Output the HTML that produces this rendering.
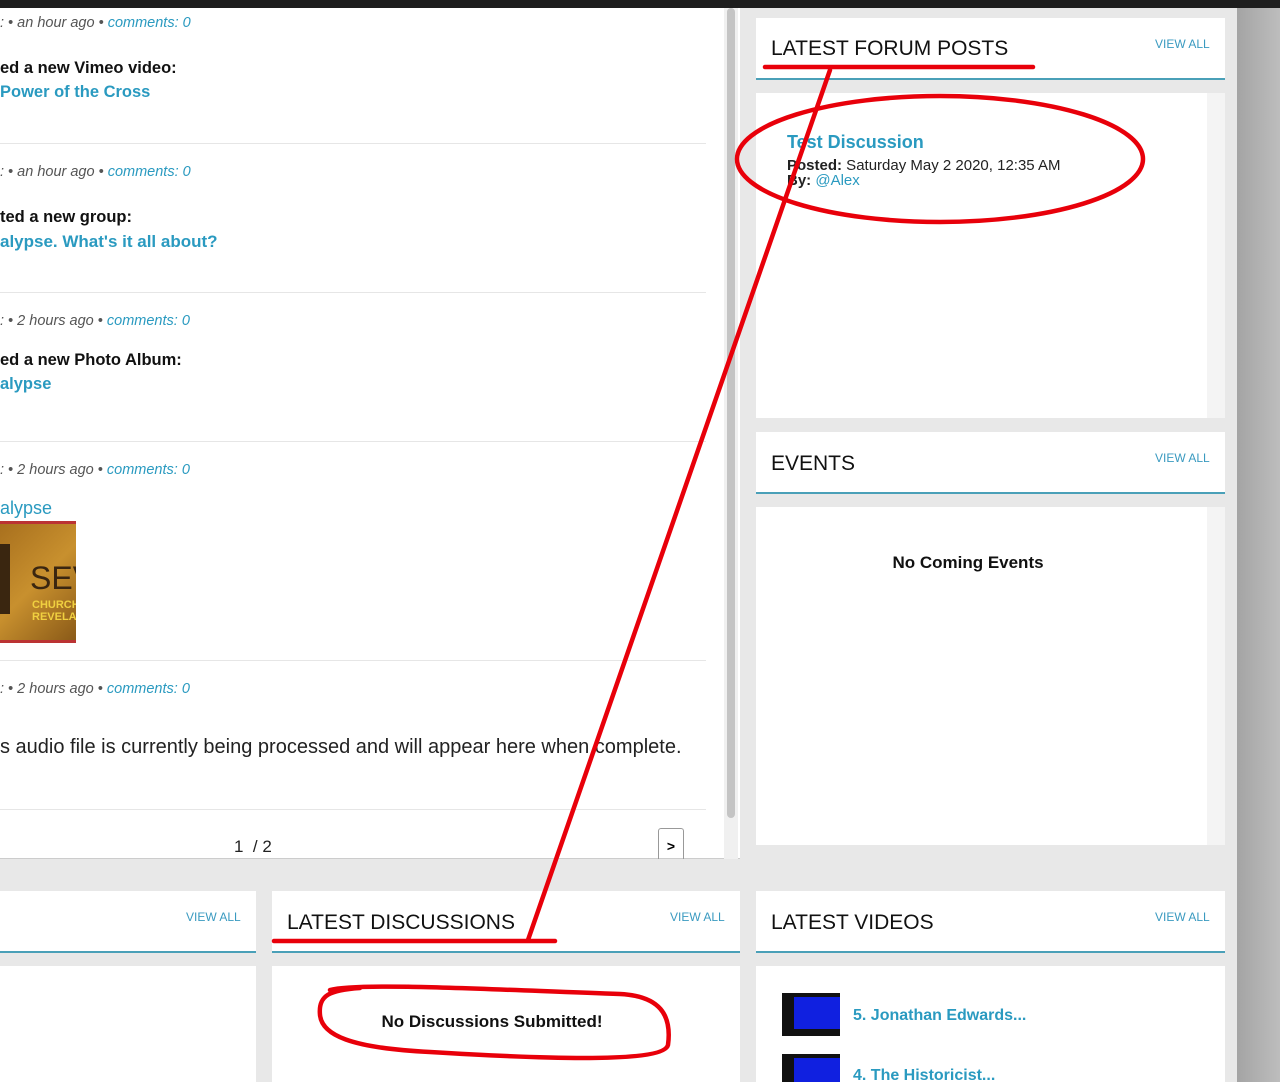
<!DOCTYPE html>
<html><head><meta charset="utf-8"><style>
*{margin:0;padding:0;box-sizing:border-box}
html,body{width:1280px;height:1082px;overflow:hidden}
body{background:#e8e8e8;font-family:"Liberation Sans",sans-serif;position:relative}
.a{position:absolute}
.top{left:0;top:0;width:1280px;height:8px;background:#1e1e1e}
.strip{left:1237px;top:8px;width:43px;height:1074px;background:linear-gradient(90deg,#a4a4a4,#bdbdbd)}
.main{left:0;top:8px;width:740px;height:851px;background:#fff;border-bottom:1px solid #ccc}
.sb{left:724px;top:8px;width:14px;height:851px;background:#f0f0f0}
.sbt{left:727px;top:8px;width:8px;height:810px;background:#c4c4c4;border-radius:4px}
.meta{font-style:italic;font-size:14.5px;color:#555}
.meta span{color:#2a9ac0}
.b{font-weight:bold;font-size:16.5px;color:#111}
.l{font-weight:bold;font-size:16.5px;color:#2a9ac0}
.hr{left:0;width:706px;height:1px;background:#e6e6e6}
.panel{background:#fff}
.h{font-size:21px;color:#111}
.va{font-size:12px;color:#3a9ac0}
.line{height:2px;background:#4aa0b8}
</style></head><body>
<div class="a top"></div>
<div class="a strip"></div>
<div class="a main"></div>
<div class="a sb"></div><div class="a sbt"></div>

<div class="a meta" style="left:0;top:15px">: • an hour ago • <span>comments: 0</span></div>
<div class="a b" style="left:0;top:59px">ed a new Vimeo video:</div>
<div class="a l" style="left:0;top:83px">Power of the Cross</div>
<div class="a hr" style="top:143px"></div>
<div class="a meta" style="left:0;top:164px">: • an hour ago • <span>comments: 0</span></div>
<div class="a b" style="left:0;top:208px">ted a new group:</div>
<div class="a l" style="left:0;top:232px;font-size:17px">alypse. What's it all about?</div>
<div class="a hr" style="top:292px"></div>
<div class="a meta" style="left:0;top:313px">: • 2 hours ago • <span>comments: 0</span></div>
<div class="a b" style="left:0;top:351px">ed a new Photo Album:</div>
<div class="a l" style="left:0;top:375px">alypse</div>
<div class="a hr" style="top:441px"></div>
<div class="a meta" style="left:0;top:462px">: • 2 hours ago • <span>comments: 0</span></div>
<div class="a" style="left:0;top:498px;font-size:18px;color:#2a9ac0">alypse</div>
<div class="a" style="left:0;top:521px;width:76px;height:122px;overflow:hidden;background:linear-gradient(135deg,#a8701e,#c8902e 50%,#8a5a18);border-top:3px solid #b33;border-bottom:3px solid #b33"><div style="position:absolute;left:0;top:20px;width:10px;height:70px;background:#3a2610"></div><div style="position:absolute;left:30px;top:36px;font-size:32px;color:#3a2610;font-family:'Liberation Sans Narrow','Liberation Sans',sans-serif">SEV</div><div style="position:absolute;left:32px;top:75px;font-size:11px;color:#f0d040;font-weight:bold;line-height:12px">CHURCHE<br>REVELA</div></div>
<div class="a hr" style="top:660px"></div>
<div class="a meta" style="left:0;top:681px">: • 2 hours ago • <span>comments: 0</span></div>
<div class="a" style="left:0;top:736px;font-size:20px;color:#222">s audio file is currently being processed and will appear here when complete.</div>
<div class="a hr" style="top:809px"></div>
<div class="a" style="left:234px;top:837px;font-size:17px;color:#222">1 &nbsp;/ 2</div>
<div class="a" style="left:658px;top:828px;width:26px;height:31px;border:1px solid #999;border-bottom:none;border-radius:3px 3px 0 0;font-size:14px;font-weight:bold;text-align:center;line-height:34px">&gt;</div>

<div class="a panel" style="left:756px;top:18px;width:469px;height:62px"></div>
<div class="a h" style="left:771px;top:37px">LATEST FORUM POSTS</div>
<div class="a va" style="left:1155px;top:37px">VIEW ALL</div>
<div class="a line" style="left:756px;top:78px;width:469px"></div>
<div class="a panel" style="left:756px;top:93px;width:451px;height:325px"></div>
<div class="a" style="left:1207px;top:93px;width:18px;height:325px;background:#f4f4f4"></div>
<div class="a" style="left:787px;top:132px;font-size:18px;font-weight:bold;color:#2a9ac0">Test Discussion</div>
<div class="a" style="left:787px;top:157px;font-size:15px;color:#222"><b>Posted:</b> Saturday May 2 2020, 12:35 AM</div>
<div class="a" style="left:787px;top:172px;font-size:15px;color:#222"><b>By:</b> <span style="color:#2a9ac0">@Alex</span></div>

<div class="a panel" style="left:756px;top:432px;width:469px;height:62px"></div>
<div class="a h" style="left:771px;top:452px">EVENTS</div>
<div class="a va" style="left:1155px;top:451px">VIEW ALL</div>
<div class="a line" style="left:756px;top:492px;width:469px"></div>
<div class="a panel" style="left:756px;top:507px;width:451px;height:338px"></div>
<div class="a" style="left:1207px;top:507px;width:18px;height:338px;background:#f4f4f4"></div>
<div class="a" style="left:756px;top:553px;width:424px;text-align:center;font-size:17px;font-weight:bold;color:#111">No Coming Events</div>

<div class="a panel" style="left:0;top:891px;width:256px;height:62px"></div>
<div class="a va" style="left:186px;top:910px">VIEW ALL</div>
<div class="a line" style="left:0;top:951px;width:256px"></div>
<div class="a panel" style="left:0;top:966px;width:256px;height:116px"></div>

<div class="a panel" style="left:272px;top:891px;width:468px;height:62px"></div>
<div class="a h" style="left:287px;top:911px">LATEST DISCUSSIONS</div>
<div class="a va" style="left:670px;top:910px">VIEW ALL</div>
<div class="a line" style="left:272px;top:951px;width:468px"></div>
<div class="a panel" style="left:272px;top:966px;width:468px;height:116px"></div>
<div class="a" style="left:272px;top:1012px;width:440px;text-align:center;font-size:17px;font-weight:bold;color:#111">No Discussions Submitted!</div>

<div class="a panel" style="left:756px;top:891px;width:469px;height:62px"></div>
<div class="a h" style="left:771px;top:911px">LATEST VIDEOS</div>
<div class="a va" style="left:1155px;top:910px">VIEW ALL</div>
<div class="a line" style="left:756px;top:951px;width:469px"></div>
<div class="a panel" style="left:756px;top:966px;width:469px;height:116px"></div>
<div class="a" style="left:782px;top:993px;width:58px;height:43px;background:#111;overflow:hidden"><div style="position:absolute;left:12px;top:4px;width:46px;height:32px;background:#1020e0"></div></div>
<div class="a" style="left:853px;top:1007px;font-size:16px;font-weight:bold;color:#2a9ac0">5. Jonathan Edwards...</div>
<div class="a" style="left:782px;top:1054px;width:58px;height:28px;background:#111;overflow:hidden"><div style="position:absolute;left:12px;top:4px;width:46px;height:30px;background:#1020e0"></div></div>
<div class="a" style="left:853px;top:1067px;font-size:16px;font-weight:bold;color:#2a9ac0">4. The Historicist...</div>

<svg class="a" style="left:0;top:0" width="1280" height="1082">
<g stroke="#e8000a" fill="none" stroke-width="4.5" stroke-linecap="round">
<line x1="765" y1="67" x2="1033" y2="67"/>
<line x1="274" y1="941" x2="555" y2="941"/>
<line x1="830" y1="70" x2="528" y2="940"/>
<ellipse cx="940" cy="159" rx="203" ry="63"/>
<path d="M330 990 C 360 982, 500 990, 620 994 C 660 996, 672 1015, 668 1045 C 664 1062, 560 1060, 430 1052 C 350 1048, 322 1035, 320 1015 C 318 995, 330 990, 360 988"/>
</g></svg>
</body></html>
